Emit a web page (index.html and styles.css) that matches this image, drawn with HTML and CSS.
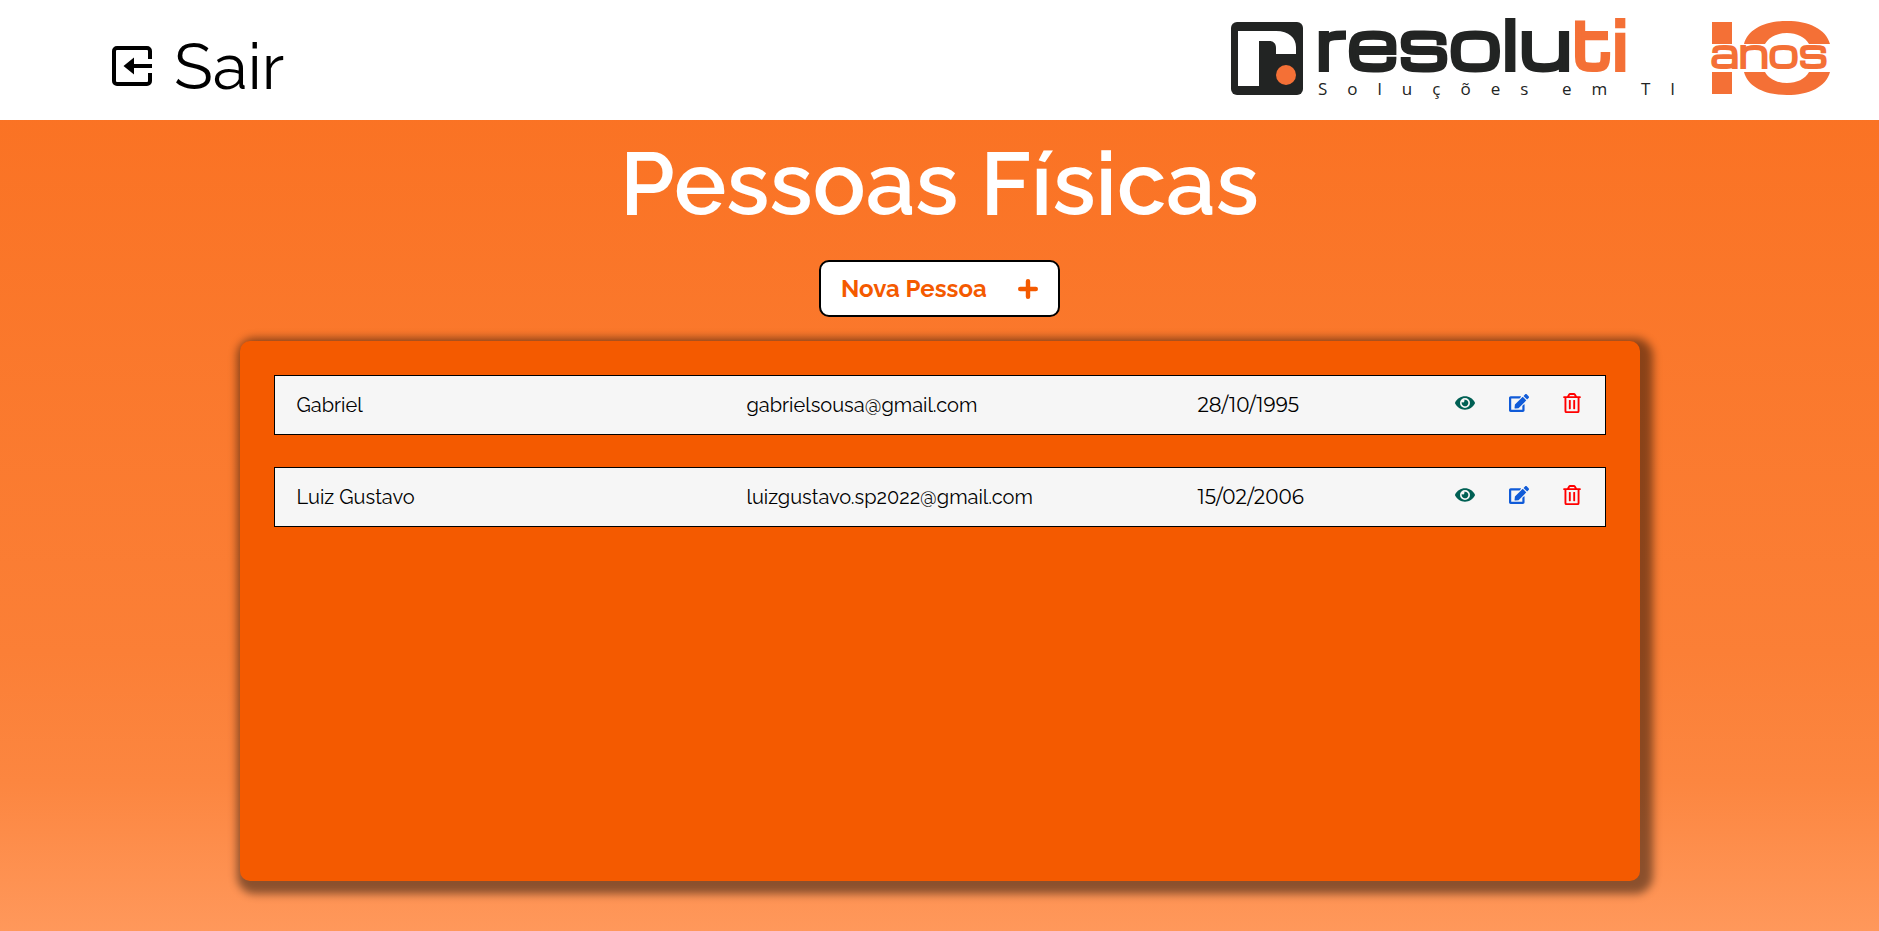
FILE: index.html
```html
<!DOCTYPE html>
<html lang="pt-BR">
<head>
<meta charset="utf-8">
<meta name="viewport" content="width=device-width, initial-scale=1">
<title>Pessoas Físicas</title>
<link rel="stylesheet" href="styles.css">
</head>
<body>
<svg class="sprite" aria-hidden="true">
  <symbol id="eye" viewBox="0 0 576 512"><path d="M572.52 241.4C518.29 135.59 410.93 64 288 64S57.68 135.64 3.48 241.41a32.35 32.35 0 0 0 0 29.19C57.71 376.41 165.07 448 288 448s230.32-71.64 284.52-177.41a32.35 32.35 0 0 0 0-29.19zM288 400a144 144 0 1 1 144-144 143.93 143.93 0 0 1-144 144zm0-240a95.31 95.31 0 0 0-25.31 3.79 47.85 47.85 0 0 1-66.9 66.9A95.78 95.78 0 1 0 288 160z"/></symbol>
  <symbol id="edit" viewBox="0 0 576 512"><path d="M402.6 83.2l90.2 90.2c3.8 3.8 3.8 10 0 13.8L274.4 405.6l-92.8 10.3c-12.4 1.4-22.9-9.1-21.5-21.5l10.3-92.8L388.800 83.2c3.800-3.800 10-3.800 13.800 0zm162-22.900l-48.800-48.800c-15.200-15.200-39.900-15.200-55.200 0l-35.400 35.400c-3.800 3.800-3.800 10 0 13.800l90.200 90.200c3.800 3.800 10 3.800 13.800 0l35.400-35.400c15.200-15.300 15.200-40 0-55.200zM384 346.200V448H64V128h229.800c3.200 0 6.200-1.300 8.500-3.500l40-40c7.600-7.600 2.200-20.500-8.500-20.500H48C21.500 64 0 85.500 0 112v352c0 26.500 21.500 48 48 48h352c26.500 0 48-21.500 48-48V306.200c0-10.700-12.900-16-20.500-8.500l-40 40c-2.200 2.300-3.500 5.300-3.500 8.500z"/></symbol>
  <symbol id="trash" viewBox="0 0 448 512"><path d="M268 416h24a12 12 0 0 0 12-12V188a12 12 0 0 0-12-12h-24a12 12 0 0 0-12 12v216a12 12 0 0 0 12 12zM432 80h-82.410l-34-56.700A48 48 0 0 0 274.410 0H173.590a48 48 0 0 0-41.160 23.300L98.410 80H16A16 16 0 0 0 0 96v16a16 16 0 0 0 16 16h16v336a48 48 0 0 0 48 48h288a48 48 0 0 0 48-48V128h16a16 16 0 0 0 16-16V96a16 16 0 0 0-16-16zM171.840 50.910A6 6 0 0 1 177 48h94a6 6 0 0 1 5.150 2.910L293.610 80H154.390zM368 464H80V128h288zm-212-48h24a12 12 0 0 0 12-12V188a12 12 0 0 0-12-12h-24a12 12 0 0 0-12 12v216a12 12 0 0 0 12 12z"/></symbol>
</svg>

<header class="header">
  <a class="logout" href="#">
    <svg class="logout-icon" viewBox="0 0 40 40" aria-hidden="true">
      <path class="logout-frame" d="M38 13V5a3 3 0 0 0-3-3H5a3 3 0 0 0-3 3v30a3 3 0 0 0 3 3h30a3 3 0 0 0 3-3v-8"/>
      <path d="M11.500 20L22 11.500V18h18v4H22v6.500z"/>
    </svg>
    <span>Sair</span>
  </a>
  <svg class="logo" viewBox="0 -18 604 120" role="img" aria-label="Resoluti Soluções em TI, 10 anos">
    <rect class="ink" x="1" y="4" width="72" height="73" rx="6"/>
    <path class="paper" d="M8 13h38c13 0 20 7 20 16v7H46v-6c0-5-3-7-7-7h-10v45H8z"/>
    <circle class="brand" cx="56" cy="57" r="10"/>
    <text class="wordmark ink" x="86" y="52">resolu<tspan class="brand">ti</tspan></text>
    <text class="tagline ink" x="88" y="77">Soluções</text>
    <text class="tagline ink" x="332" y="77">em</text>
    <text class="tagline ink" x="411" y="77">TI</text>
    <path class="brand" d="M482 4h20v22h-20zM482 54h20v22h-20z"/>
    <path class="brand" d="M514 26C518 11 535 3 557 3s39 8 43 23h-21c-4-7-12-11-22-11s-18 4-22 11zM514 54c4 15 21 23 43 23s39-8 43-23h-21c-4 7-12 11-22 11s-18-4-22-11z"/>
    <text class="years brand" x="480" y="50">anos</text>
  </svg>
</header>

<main class="main">
  <h1 class="title">Pessoas Físicas</h1>
  <button class="new-person" type="button">
    <span>Nova Pessoa</span>
    <svg class="plus" viewBox="0 0 18 18" aria-hidden="true"><path d="M9 2v14M2 9h14"/></svg>
  </button>
  <section class="panel">
    <table class="people" aria-label="Pessoas Físicas">
      <tbody>
        <tr>
          <td class="wide">Gabriel</td>
          <td class="wide">gabrielsousa@gmail.com</td>
          <td class="date">28/10/1995</td>
          <td>
            <div class="actions">
              <button class="action view" type="button" aria-label="Visualizar"><svg><use href="#eye"/></svg></button>
              <button class="action edit" type="button" aria-label="Editar"><svg><use href="#edit"/></svg></button>
              <button class="action remove" type="button" aria-label="Excluir"><svg><use href="#trash"/></svg></button>
            </div>
          </td>
        </tr>
        <tr>
          <td class="wide">Luiz Gustavo</td>
          <td class="wide">luizgustavo.sp2022@gmail.com</td>
          <td class="date">15/02/2006</td>
          <td>
            <div class="actions">
              <button class="action view" type="button" aria-label="Visualizar"><svg><use href="#eye"/></svg></button>
              <button class="action edit" type="button" aria-label="Editar"><svg><use href="#edit"/></svg></button>
              <button class="action remove" type="button" aria-label="Excluir"><svg><use href="#trash"/></svg></button>
            </div>
          </td>
        </tr>
      </tbody>
    </table>
  </section>
</main>
</body>
</html>
```

FILE: styles.css
```css
* {
  box-sizing: border-box;
}

body {
  margin: 0;
  min-height: 100vh;
  display: flex;
  flex-direction: column;
  font-family: Raleway, Lato, "Open Sans", sans-serif;
  color: #000;
  background: linear-gradient(#fa7020, #fb7f36 70%, #fc8640 84%, #ff985b);
}

button {
  font: inherit;
  cursor: pointer;
}

.sprite {
  display: none;
}

.header {
  height: 120px;
  padding: 0 45px 0 112px;
  display: flex;
  align-items: flex-start;
  justify-content: space-between;
  background: #fff;
}

.logout {
  display: flex;
  align-items: center;
  gap: 22px;
  height: 132px;
  color: #000;
  font-size: 64px;
  font-weight: 400;
  text-decoration: none;
}

.logout-icon {
  width: 40px;
  height: 40px;
}

.logout-frame {
  fill: none;
  stroke: #000;
  stroke-width: 4;
}

.logo {
  width: 604px;
  height: 120px;
}

.ink {
  fill: #222423;
}

.paper {
  fill: #fff;
}

.brand {
  fill: #f47036;
}

.wordmark {
  font: 66px Michroma, "DejaVu Sans", sans-serif;
  stroke: #222423;
  stroke-width: 4px;
}

.wordmark .brand {
  stroke: #f47036;
}

.tagline {
  font: 400 17px "Open Sans", sans-serif;
  letter-spacing: 20px;
}

.years {
  font: 38px Michroma, "DejaVu Sans", sans-serif;
  stroke: #f47036;
  stroke-width: 2px;
}

.main {
  flex: 1;
  display: flex;
  flex-direction: column;
  align-items: center;
  padding: 12px 48px 50px;
}

.title {
  margin: 0;
  color: #fff;
  font-size: 88px;
  font-weight: 600;
  line-height: 104px;
}

.new-person {
  display: flex;
  align-items: center;
  justify-content: space-between;
  width: 241px;
  height: 57px;
  margin: 24px 0;
  padding: 0 20px;
  border: 2px solid #000;
  border-radius: 10px;
  background: #fff;
  color: #f45a00;
  font-size: 24px;
  font-weight: 700;
}

.plus {
  width: 20px;
  height: 20px;
  fill: none;
  stroke: currentColor;
  stroke-width: 4;
  stroke-linecap: round;
}

.panel {
  flex: 1;
  width: 100%;
  max-width: 1400px;
  padding: 2px 34px;
  border-radius: 10px;
  background: #f45a00;
  box-shadow: 5px 5px 8px 8px rgba(0, 0, 0, 0.45);
}

.people {
  width: 100%;
  border-collapse: separate;
  border-spacing: 0 32px;
  font-size: 20px;
  font-weight: 400;
  table-layout: fixed;
}

.people td {
  height: 60px;
  padding: 0 24px 0 22px;
  border: solid #000;
  border-width: 1px 0;
  background: #f6f6f6;
}

.people td:first-child {
  border-left-width: 1px;
}

.people td:last-child {
  border-right-width: 1px;
}

.people .wide {
  width: 451px;
}

.people .date {
  font-family: Montserrat, Raleway, sans-serif;
}

.actions {
  display: flex;
  align-items: center;
  justify-content: flex-end;
  gap: 34px;
  padding-bottom: 4px;
}

.action {
  display: flex;
  padding: 0;
  border: 0;
  background: none;
}

.action svg {
  width: 20px;
  height: 18px;
  fill: currentColor;
}

.view {
  color: #006054;
}

.edit {
  color: #105bd8;
}

.remove {
  color: #f00;
}

.remove svg {
  width: 18px;
  height: 20px;
}
```
